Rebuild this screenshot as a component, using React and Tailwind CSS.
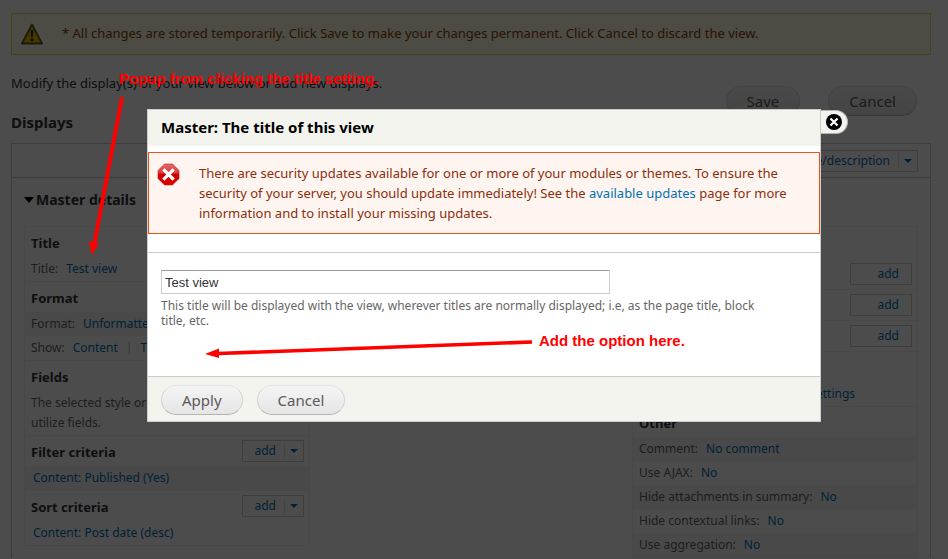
import React, { useState } from "react";

const LINK = "text-[#0071b3] hover:underline";

const WarningIcon = () => (
  <svg className="w-6 h-6 shrink-0" viewBox="0 0 24 24" aria-hidden="true">
    <path d="M12 2.5 22 21.500H2Z" fill="#e6b800" stroke="#5f5832" strokeWidth="1.8" strokeLinejoin="round" />
    <path d="M10.6 8h2.8l-.6 7.200h-1.600Z" fill="#3b3000" />
    <circle cx="12" cy="17.8" r="1.5" fill="#3b3000" />
  </svg>
);

const ErrorIcon = () => (
  <svg className="w-6 h-6 shrink-0" viewBox="0 0 24 24" aria-hidden="true">
    <defs>
      <linearGradient id="stop" x1="0" y1="0" x2="0" y2="1">
        <stop offset="0" stopColor="#e4696b" />
        <stop offset="0.42" stopColor="#dd3a3c" />
        <stop offset="0.5" stopColor="#cc0000" />
        <stop offset="1" stopColor="#d80000" />
      </linearGradient>
    </defs>
    <path d="M7.500 1h8L22 7.500v8L15.500 22h-8L1 15.500v-8Z" fill="url(#stop)" stroke="#c4171a" strokeWidth="0.6" />
    <path d="m7.500 7.500 8 8m0-8-8 8" stroke="#fff" strokeWidth="3.2" strokeLinecap="square" />
  </svg>
);

const Caret = () => (
  <svg className="w-2 h-1" viewBox="0 0 8 4" aria-hidden="true">
    <path d="M0 0h8L4 4Z" fill="currentColor" />
  </svg>
);

const PillButton = ({ children, onClick }) => (
  <button
    type="button"
    onClick={onClick}
    className="h-[30px] px-5 rounded-full border border-[#e4e4e4] border-x-[#d2d2d2] border-b-[#b4b4b4] bg-gradient-to-b from-[#f5f5f5] to-[#e5e5e5] text-[15px] text-[#5a5a5a]"
  >
    {children}
  </button>
);

const DropButton = ({ label, children }) => (
  <div className="flex items-stretch h-[22px] border border-[#ccc] bg-white text-xs leading-5 text-[#0071b3]">
    <button type="button" className="pl-3 pr-2">{children}</button>
    <button type="button" aria-label={label} className="my-0.5 px-[5px] border-l border-[#e0e0e0] flex items-center">
      <Caret />
    </button>
  </div>
);

const AddButton = () => (
  <button
    type="button"
    className="w-[62px] h-[22px] pr-3 border border-[#ccc] bg-white text-right text-xs leading-5 text-[#0071b3]"
  >
    add
  </button>
);

const Section = ({ title, action, children }) => (
  <section className="border-b border-[#f0f0f0]">
    <div className="h-[30px] flex items-center justify-between pl-1.5 pr-[5px]">
      <h4 className="pt-1 text-[13px] font-bold text-[#333]">{title}</h4>
      {action}
    </div>
    {children}
  </section>
);

const Row = ({ label, links, shaded }) => (
  <div className={`h-6 flex items-center px-1.5 text-xs whitespace-nowrap text-[#666] ${shaded ? "bg-[#f4f4f4]" : ""}`}>
    {label && <span className="mr-2">{label}</span>}
    {links.map((link, i) => (
      <React.Fragment key={link}>
        {i > 0 && <span className="mx-2 text-[#bbb]">|</span>}
        <a href="#" className={label ? LINK : `ml-0.5 ${LINK}`}>{link}</a>
      </React.Fragment>
    ))}
  </div>
);

const otherRows = [
  { label: "Comment:", value: "No comment" },
  { label: "Use AJAX:", value: "No" },
  { label: "Hide attachments in summary:", value: "No" },
  { label: "Hide contextual links:", value: "No" },
  { label: "Use aggregation:", value: "No" },
];

const ViewEditor = () => (
  <div className="pl-[11px] pr-[17px] pt-[13px]">
    <div className="h-[42px] flex items-center gap-[18px] px-2 border border-[#eedd55] bg-[#fffce5] text-[13px] text-[#884400]">
      <WarningIcon />
      <p>* All changes are stored temporarily. Click Save to make your changes permanent. Click Cancel to discard the view.</p>
    </div>

    <div className="flex justify-between">
      <div>
        <p className="mt-[18px] text-[13px] leading-5 text-[#333]">
          Modify the display(s) of your view below or add new displays.
        </p>
        <h2 className="mt-[18px] mb-[10px] text-[15px] leading-[22px] font-bold text-[#333]">Displays</h2>
      </div>
      <div className="flex gap-7 mt-[31px] mr-[14px]">
        <PillButton>Save</PillButton>
        <PillButton>Cancel</PillButton>
      </div>
    </div>

    <div className="border border-b-0 border-[#ccc]">
      <div className="h-[34px] flex items-center justify-end pr-3 border-b border-[#ccc]">
        <DropButton label="More view actions">edit view name/description</DropButton>
      </div>

      <div className="px-3">
        <h3 className="flex items-center gap-0.5 h-[48px] pb-1 text-sm font-bold text-[#333]">
          <svg className="w-[10px] h-[6px]" viewBox="0 0 10 6" aria-hidden="true">
            <path d="M0 0h10L5 6Z" fill="#000" />
          </svg>
          Master details
        </h3>

        <div className="flex items-start justify-between">
          <div className="w-[286px] border border-b-0 border-[#f0f0f0]">
            <Section title="Title">
              <Row label="Title:" links={["Test view"]} />
            </Section>
            <Section title="Format">
              <Row label="Format:" links={["Unformatted list", "Settings"]} shaded />
              <Row label="Show:" links={["Content", "Teaser"]} />
            </Section>
            <Section title="Fields">
              <p className="h-[44px] pl-1.5 pr-8 pt-0.5 text-xs leading-5 text-[#666]">
                The selected style or row format does not utilize fields.
              </p>
            </Section>
            <Section title="Filter criteria" action={<DropButton label="More filter actions">add</DropButton>}>
              <Row links={["Content: Published (Yes)"]} shaded />
            </Section>
            <Section title="Sort criteria" action={<DropButton label="More sort actions">add</DropButton>}>
              <Row links={["Content: Post date (desc)"]} />
            </Section>
          </div>

          <div className="w-[286px] border border-b-0 border-[#f0f0f0]">
            <h4 className="h-8 px-1.5 pt-1.5 text-[13px] font-bold text-[#333]">Advanced</h4>
            <Section title="Contextual filters" action={<AddButton />} />
            <Section title="Relationships" action={<AddButton />} />
            <Section title="No results behavior" action={<AddButton />} />
            <Section title="Exposed form">
              <Row label="Exposed form style:" links={["Basic", "Settings"]} />
            </Section>
            <Section title="Other">
              {otherRows.map((row, i) => (
                <Row key={row.label} label={row.label} links={[row.value]} shaded={i % 2 === 0} />
              ))}
            </Section>
          </div>
        </div>
      </div>
    </div>
  </div>
);

const TitleDialog = ({ onClose }) => {
  const [title, setTitle] = useState("Test view");

  return (
    <div className="absolute inset-x-0 top-[109px] pl-[147px] pr-[127px]">
      <div role="dialog" aria-labelledby="dialog-title" className="relative border border-[#ccc] bg-white">
        <button
          type="button"
          aria-label="Close"
          onClick={onClose}
          className="absolute left-full top-0 w-7 h-6 flex items-center justify-center rounded-r-full border border-l-[#ccc] border-[#b5b5b0] bg-[#f3f4ee]"
        >
          <svg className="w-4 h-4" viewBox="0 0 16 16" aria-hidden="true">
            <circle cx="8" cy="8" r="8" fill="#000" />
            <path d="m4.500 4.500 7 7m0-7-7 7" stroke="#fff" strokeWidth="2.200" />
          </svg>
        </button>

        <h2 id="dialog-title" className="h-9 px-[13px] bg-[#f3f4ee] text-[15px] leading-[34px] font-bold text-black">
          Master: The title of this view
        </h2>

        <div className="flex gap-[18px] mt-1.5 px-2 py-[10px] border border-[#ed541d] bg-[#fef5f1] text-[13px] leading-5 text-[#8c2e0b]">
          <ErrorIcon />
          <p>
            There are security updates available for one or more of your modules or themes. To ensure the security of
            your server, you should update immediately! See the <a href="#" className={LINK}>available updates</a> page
            for more information and to install your missing updates.
          </p>
        </div>

        <div className="mt-[18px] px-[13px] pt-[17px] pb-12 border-t border-[#ccc]">
          <input
            type="text"
            aria-label="Title"
            aria-describedby="title-help"
            value={title}
            onChange={(e) => setTitle(e.target.value)}
            className="block w-full max-w-[449px] h-6 px-[3px] border border-[#ccc] border-t-[#999] bg-white font-['Liberation_Sans',Arial,sans-serif] text-[13px] text-[#333] outline-none"
          />
          <p id="title-help" className="mt-1 pr-10 text-xs leading-[15px] text-[#666]">
            This title will be displayed with the view, wherever titles are normally displayed; i.e, as the page title,
            block title, etc.
          </p>
        </div>

        <div className="flex gap-[14px] px-[13px] pt-2 pb-1.5 border-t border-[#ccc] bg-[#f3f4ee]">
          <PillButton onClick={onClose}>Apply</PillButton>
          <PillButton onClick={onClose}>Cancel</PillButton>
        </div>
      </div>
    </div>
  );
};

// Red notes and arrows drawn over the whole screen
const Annotations = () => (
  <div className="absolute inset-0 pointer-events-none font-['Liberation_Sans',Arial,sans-serif] text-[15px] leading-5 font-bold text-[#f00]">
    <svg className="absolute left-0 top-0 w-[948px] h-[559px]" viewBox="0 0 948 559" aria-hidden="true">
      <path d="M122 97 94.500 243" stroke="#f00" strokeWidth="4" />
      <path d="M88.500 241.500 99 243.500 92 255Z" fill="#f00" />
      <path d="M532 342 218 353.500" stroke="#f00" strokeWidth="3.600" />
      <path d="M219 348.500V358L205 354Z" fill="#f00" />
    </svg>
    <p className="absolute left-[119px] top-[69px] whitespace-nowrap">Popup from clicking the title setting.</p>
    <p className="absolute left-[539px] top-[331px] whitespace-nowrap">Add the option here.</p>
  </div>
);

const App = () => {
  const [isOpen, setIsOpen] = useState(true);

  return (
    <div className="relative h-screen overflow-hidden bg-white font-['Noto_Sans','Lucida_Grande',sans-serif]">
      <ViewEditor />
      {isOpen && (
        <>
          <div className="absolute inset-0 bg-black/70" />
          <TitleDialog onClose={() => setIsOpen(false)} />
          <Annotations />
        </>
      )}
    </div>
  );
};

export default App;
